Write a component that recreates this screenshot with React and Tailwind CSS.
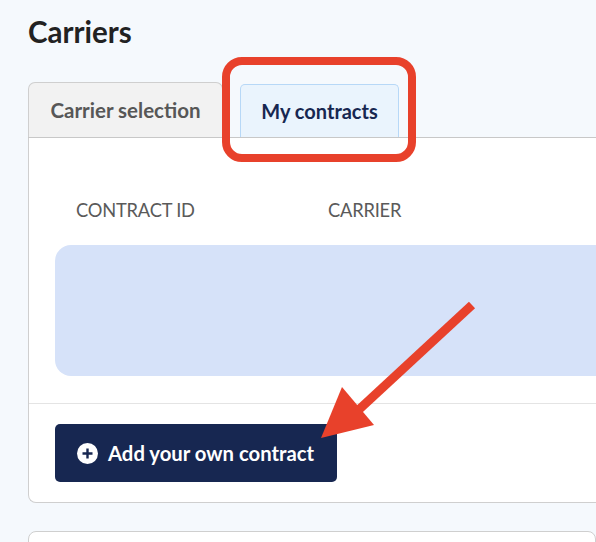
export default function App() {
  return (
    <div className="relative w-[596px] h-[542px] overflow-hidden bg-[#f5f9fd] font-['Lato',sans-serif]">
      <div className="pl-[28px] pt-[15px]">
        <h1 className="text-[29.5px] leading-[34px] font-bold text-[#222222]">Carriers</h1>
        <div className="mt-[34px]">
          <div className="flex items-end h-[55px] border-b border-[#c8c8c8]">
            <div className="w-[195px] h-[55px] flex items-center justify-center bg-[#f2f2f2] border border-b-0 border-[#cfcfcf] rounded-t-[7px] text-[20.5px] font-bold text-[#575757]">
              Carrier selection
            </div>
            <div className="ml-[17px] w-[159px] h-[53px] flex items-center justify-center bg-[#eaf4fd] border border-b-0 border-[#b7d8f7] rounded-t-[5px] text-[20px] font-bold text-[#172751]">
              My contracts
            </div>
          </div>
          <div className="h-[365px] bg-white border-l border-b border-[#cfcfcf] rounded-bl-[8px] flex flex-col">
            <div className="flex pt-[59px] h-[107px] text-[18.3px] text-[#5a5a5a] tracking-[-0.2px]">
              <div className="pl-[47px] w-[299px]">CONTRACT ID</div>
              <div>CARRIER</div>
            </div>
            <div className="ml-[26px] h-[131px] bg-[#d6e2f9] rounded-l-[16px]" />
            <div className="mt-[27px] border-t border-[#e4e4e4]" />
            <div className="pl-[26px] pt-[20px]">
              <button className="w-[282px] h-[58px] flex items-center pl-[22px] gap-[10px] bg-[#172751] rounded-[5px] text-white text-[20.3px] font-bold">
                <svg width="21" height="21" viewBox="0 0 21 21">
                  <circle cx="10.5" cy="10.5" r="10.5" fill="#ffffff" />
                  <path d="M10.5 5.5v10M5.5 10.5h10" stroke="#172751" strokeWidth="2.4" />
                </svg>
                Add your own contract
              </button>
            </div>
          </div>
          <div className="mt-[28px] h-[30px] bg-white border border-[#cfcfcf] rounded-t-[8px]" />
        </div>
      </div>

      <div className="absolute left-[222px] top-[57px] w-[194px] h-[105px] border-[8px] border-[#e8412b] rounded-[20px]" />

      <svg className="absolute left-0 top-0" width="596" height="542" viewBox="0 0 596 542">
        <line x1="472" y1="305" x2="352" y2="416" stroke="#e8412b" strokeWidth="9" />
        <polygon points="321,438 342,387 374,425" fill="#e8412b" />
      </svg>
    </div>
  );
}
